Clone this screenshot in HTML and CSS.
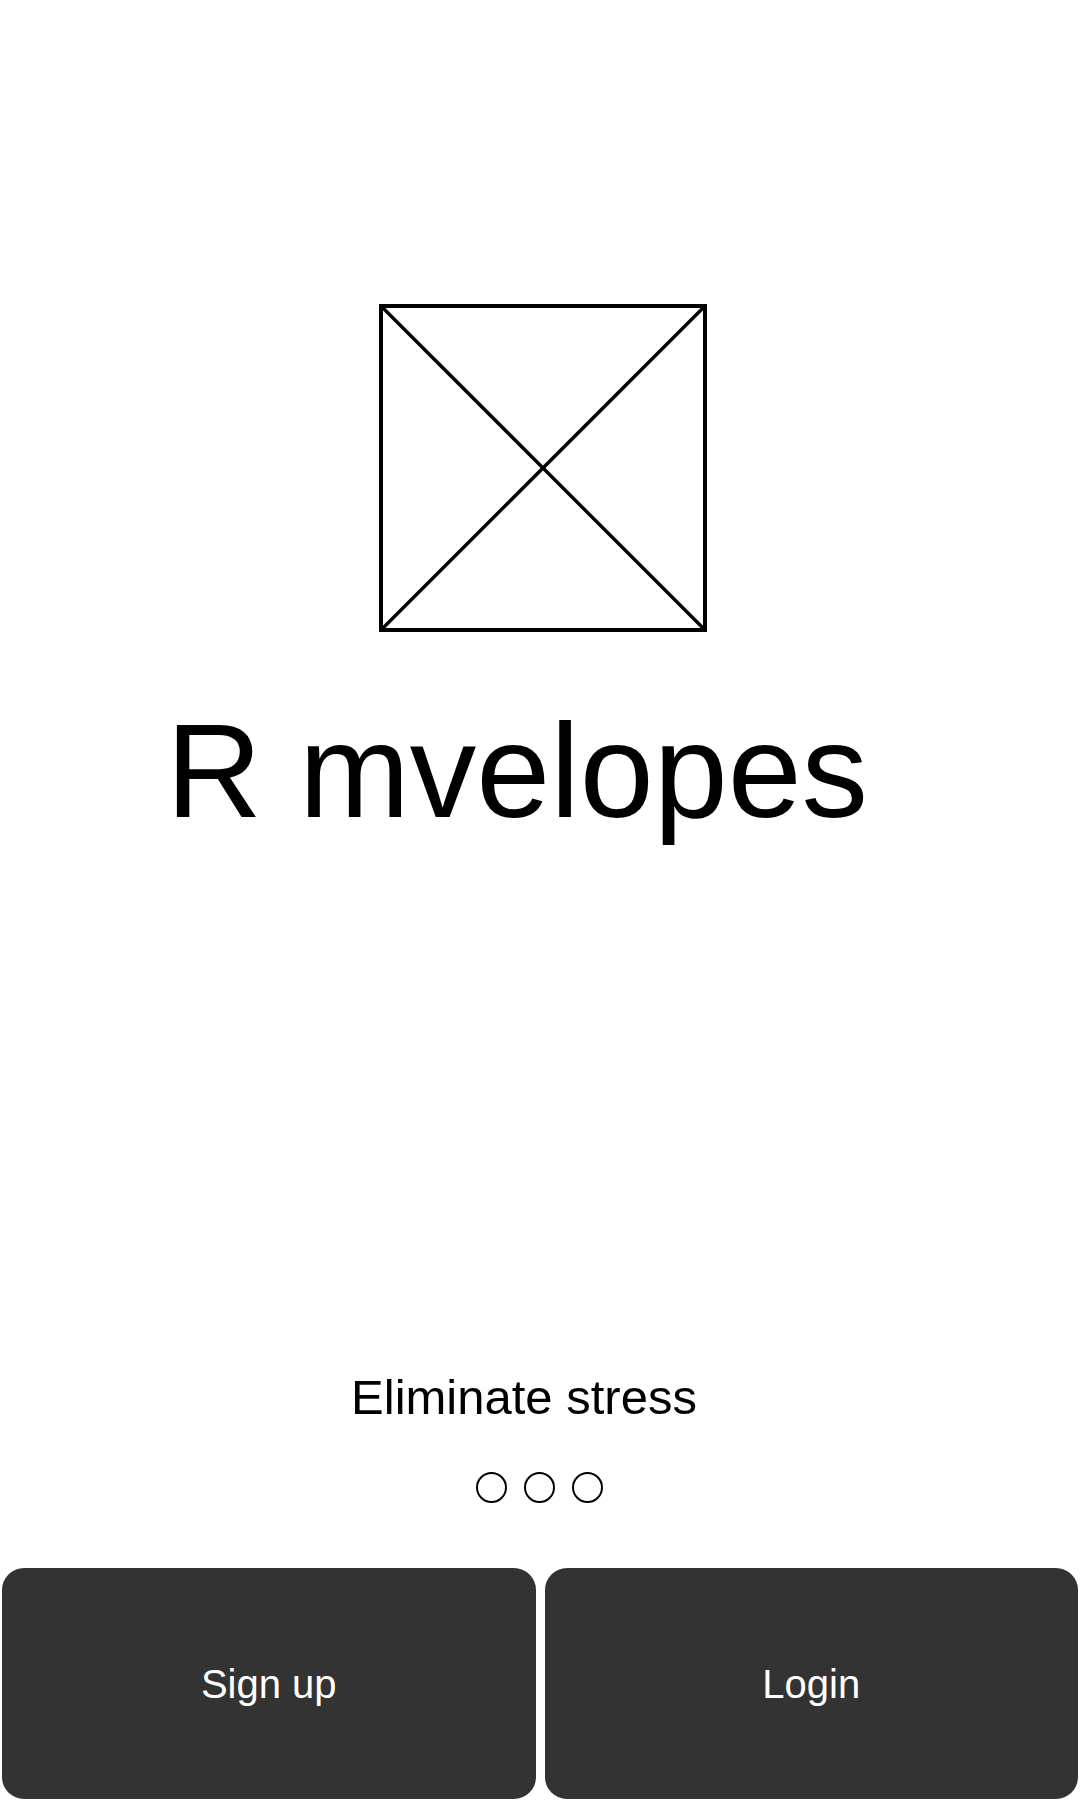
FILE: index.html
```html
<!DOCTYPE html>
<html lang="en">
<head>
<meta charset="utf-8">
<title>R mvelopes</title>
<link rel="stylesheet" href="styles.css">
</head>
<body>
<main class="screen">
  <div class="logo">
    <svg width="328" height="328" viewBox="0 0 328 328" xmlns="http://www.w3.org/2000/svg">
      <rect x="2" y="2" width="324" height="324" fill="none" stroke="#000" stroke-width="4"/>
      <line x1="2" y1="2" x2="326" y2="326" stroke="#000" stroke-width="3.4"/>
      <line x1="326" y1="2" x2="2" y2="326" stroke="#000" stroke-width="3.4"/>
    </svg>
  </div>
  <h1 class="title">R mvelopes</h1>
  <p class="tagline">Eliminate stress</p>
  <div class="dots">
    <span class="dot"></span>
    <span class="dot"></span>
    <span class="dot"></span>
  </div>
  <div class="actions">
    <button class="btn">Sign up</button>
    <button class="btn">Login</button>
  </div>
</main>
</body>
</html>
```

FILE: styles.css
```css
html, body {
  margin: 0;
  padding: 0;
  background: #fff;
}
body {
  font-family: "Liberation Sans", Arial, sans-serif;
  color: #000;
}
.screen {
  width: 1080px;
  height: 1800px;
  display: flex;
  flex-direction: column;
  align-items: stretch;
}
.logo {
  margin-top: 304px;
  display: flex;
  justify-content: center;
  padding-left: 5px;
  height: 328px;
}
.logo svg {
  display: block;
}
.title {
  margin: 73px 0 0;
  font-size: 133px;
  font-weight: 400;
  line-height: 1;
  text-align: center;
  padding-right: 46px;
  height: 133px;
}
.tagline {
  margin: 535px 0 0;
  font-size: 49px;
  line-height: 1;
  text-align: center;
  padding-right: 32px;
  height: 49px;
}
.dots {
  margin-top: 50px;
  display: flex;
  justify-content: center;
  gap: 17px;
  padding-right: 2px;
}
.dot {
  width: 27px;
  height: 27px;
  border: 2px solid #000;
  border-radius: 50%;
  box-sizing: content-box;
}
.actions {
  margin-top: 65px;
  display: flex;
  gap: 9px;
  padding: 0 2px;
}
.btn {
  flex: 1;
  height: 231px;
  background: #333;
  color: #fff;
  border: none;
  border-radius: 22px;
  font-family: "Liberation Sans", Arial, sans-serif;
  font-size: 40px;
  line-height: 1;
  padding: 0;
}
```
